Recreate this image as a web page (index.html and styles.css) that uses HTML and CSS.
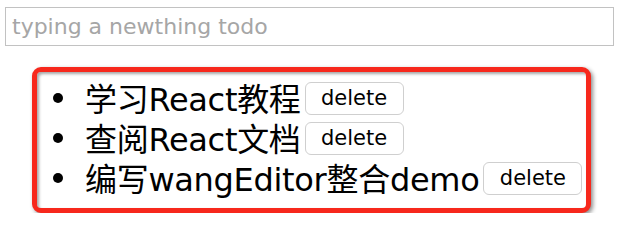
FILE: index.html
```html
<!DOCTYPE html>
<html lang="zh">
<head>
<meta charset="utf-8">
<title>todo</title>
<link rel="stylesheet" href="styles.css">
</head>
<body>
<div class="app">
  <input class="new-todo" type="text" placeholder="typing a newthing todo">
  <div class="frame">
    <ul class="todo-list">
      <li class="todo"><span class="label">学习React教程</span><button class="del">delete</button></li>
      <li class="todo"><span class="label">查阅React文档</span><button class="del">delete</button></li>
      <li class="todo"><span class="label">编写wangEditor整合demo</span><button class="del">delete</button></li>
    </ul>
  </div>
</div>
</body>
</html>
```
FILE: styles.css
```css
html, body {
  margin: 0;
  padding: 0;
  background: #ffffff;
}
.app {
  padding: 7px 0 0 5px;
  font-family: "DejaVu Sans", "Noto Sans CJK SC", sans-serif;
}
.new-todo {
  display: block;
  box-sizing: border-box;
  width: 609px;
  height: 39px;
  margin: 0;
  padding: 0 0 0 6px;
  border: 1px solid #c2c2c2;
  border-radius: 0;
  outline: none;
  font-family: "DejaVu Sans", "Noto Sans CJK SC", sans-serif;
  font-size: 22px;
  color: #333;
}
.new-todo::placeholder {
  color: #a6a6a6;
}
.frame {
  box-sizing: border-box;
  width: 559px;
  height: 146px;
  margin: 21px 0 0 27px;
  border: 5px solid #f7281c;
  border-radius: 9px;
  box-shadow: 2px 2px 4px rgba(0, 0, 0, 0.45), inset 2px 2px 3px rgba(0, 0, 0, 0.35);
  background: #fff;
}
.todo-list {
  list-style: none;
  margin: 0;
  padding: 5px 0 0 0;
}
.todo {
  display: flex;
  align-items: center;
  height: 40px;
  font-size: 32px;
  color: #000;
  white-space: nowrap;
}
.todo::before {
  content: "";
  flex: none;
  width: 10px;
  height: 10px;
  border-radius: 50%;
  background: #000;
  margin: 2px 22px 0 16px;
}
.label {
  letter-spacing: -0.3px;
}
.del {
  flex: none;
  box-sizing: border-box;
  width: 99px;
  height: 33px;
  margin: 2px 0 0 4px;
  padding: 0;
  border: 1px solid #cfcfcf;
  border-radius: 6px;
  background: #fff;
  font-family: "DejaVu Sans", sans-serif;
  font-size: 21px;
  color: #000;
}
```
